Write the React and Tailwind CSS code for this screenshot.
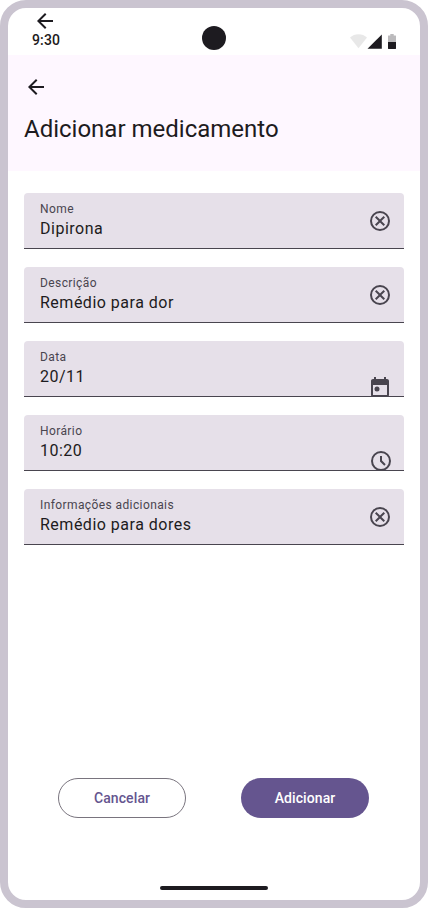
const ArrowBack = ({ className = '' }) => (
  <svg className={`size-6 shrink-0 ${className}`} viewBox="0 0 24 24" fill="#1D1B20">
    <path d="M7.825 13L13.425 18.6L12 20L4 12L12 4L13.425 5.4L7.825 11H20V13H7.825Z" />
  </svg>
);

const CancelIcon = () => (
  <svg className="mt-4 mr-3 size-6 shrink-0" viewBox="0 0 24 24" fill="#49454F">
    <path d="M8.4 17L12 13.4L15.6 17L17 15.6L13.4 12L17 8.4L15.6 7L12 10.6L8.4 7L7 8.4L10.6 12L7 15.6L8.4 17ZM12 22A10 10 0 1 1 12 2A10 10 0 0 1 12 22ZM12 20A8 8 0 1 0 12 4A8 8 0 0 0 12 20Z" />
  </svg>
);

const CalendarIcon = () => (
  <svg className="mt-[34px] mr-3 size-6 shrink-0" viewBox="0 0 24 24" fill="#49454F">
    <path
      fillRule="evenodd"
      d="M5 22C3.9 22 3 21.1 3 20V6C3 4.9 3.9 4 5 4H6V2H8V4H16V2H18V4H19C20.1 4 21 4.9 21 6V20C21 21.1 20.1 22 19 22H5ZM5 20H19V10H5V20Z"
    />
    <circle cx="9" cy="14" r="2.5" />
  </svg>
);

const ClockIcon = () => (
  <svg className="mt-[34px] mr-[11px] size-6 shrink-0" viewBox="0 0 24 24" fill="#49454F">
    <path d="M15.3 16.7L16.7 15.3L13 11.6V7H11V12.4L15.3 16.7ZM12 22A10 10 0 1 1 12 2A10 10 0 0 1 12 22ZM12 20A8 8 0 1 0 12 4A8 8 0 0 0 12 20Z" />
  </svg>
);

const fields = [
  { label: 'Nome', value: 'Dipirona', Icon: CancelIcon },
  { label: 'Descrição', value: 'Remédio para dor', Icon: CancelIcon },
  { label: 'Data', value: '20/11', Icon: CalendarIcon },
  { label: 'Horário', value: '10:20', Icon: ClockIcon },
  { label: 'Informações adicionais', value: 'Remédio para dores', Icon: CancelIcon },
];

function Field({ label, value, Icon }) {
  return (
    <div className="flex h-14 items-start justify-between overflow-hidden rounded-t border-b border-[#49454F] bg-[#E6E0E9]">
      <div className="pt-2 pl-4">
        <div className="text-xs leading-4 tracking-[0.4px] text-[#49454F]">{label}</div>
        <div className="text-base leading-6 tracking-[0.5px] text-[#1D1B20]">{value}</div>
      </div>
      <Icon />
    </div>
  );
}

function StatusBar() {
  return (
    <div className="grid h-[47px] grid-cols-3">
      <div className="flex flex-col pt-px pl-6">
        <ArrowBack className="ml-px" />
        <span className="-mt-[3px] text-sm leading-5 font-medium tracking-[0.14px] text-[#1D1B20]">9:30</span>
      </div>
      <div className="mt-[18px] size-6 justify-self-center rounded-full bg-[#1D1B20]" />
      <svg className="mt-6 mr-6 h-[18px] w-[46px] justify-self-end" viewBox="0 0 46 18">
        <path d="M8.5 16.3L0 5.6C2.3 3.4 5.2 2.2 8.5 2.2S14.7 3.4 17 5.6Z" fill="#1D1B20" fillOpacity="0.1" />
        <path d="M17.5 16.8L31.8 2.5V16.8Z" fill="#1D1B20" />
        <path d="M38 10V3.8Q38 3.4 38.4 3.4H40.3V2H43.7V3.4H45.6Q46 3.4 46 3.8V10Z" fill="#1D1B20" fillOpacity="0.3" />
        <path d="M38 10H46V16.6Q46 17 45.6 17H38.4Q38 17 38 16.6Z" fill="#1D1B20" />
      </svg>
    </div>
  );
}

export default function App() {
  return (
    <div className="bg-white">
      <main className="flex h-[908px] w-[428px] flex-col overflow-hidden rounded-[26px] border-8 border-[#CAC4D0] bg-white font-[Roboto,sans-serif]">
        <StatusBar />
        <header className="h-[116px] bg-[#FEF7FF] px-4 pt-5">
          <ArrowBack />
          <h1 className="mt-3.5 text-2xl leading-8 text-[#1D1B20]">Adicionar medicamento</h1>
        </header>
        <section className="mt-[22px] flex flex-col gap-[18px] px-4">
          {fields.map((field) => (
            <Field key={field.label} {...field} />
          ))}
        </section>
        <div className="mt-auto flex justify-between pr-[51px] pl-[50px]">
          <button className="h-10 w-32 rounded-full border border-[#79747E] text-sm leading-5 font-medium tracking-[0.1px] text-[#65558F]">
            Cancelar
          </button>
          <button className="h-10 w-32 rounded-full bg-[#65558F] text-sm leading-5 font-medium tracking-[0.1px] text-white">
            Adicionar
          </button>
        </div>
        <div className="mt-[68px] mb-2.5 h-1 w-[108px] shrink-0 self-center rounded-full bg-[#1D1B20]" />
      </main>
    </div>
  );
}
